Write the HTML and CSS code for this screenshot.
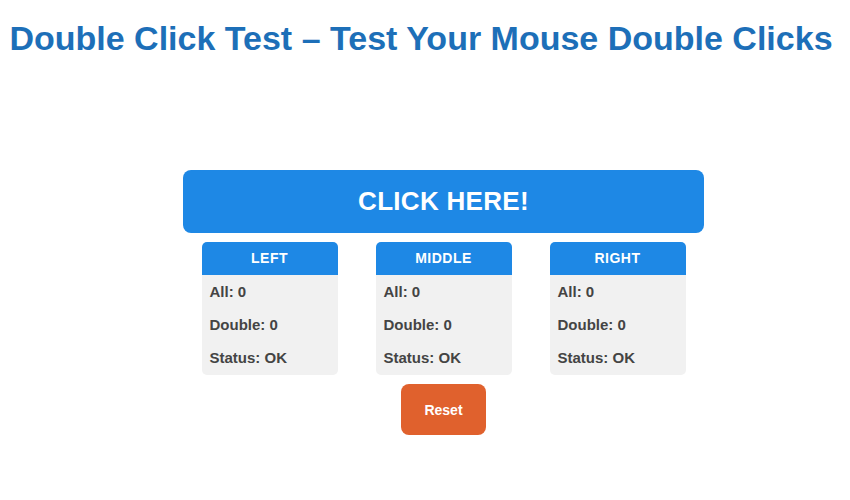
FILE: index.html
```html
<!DOCTYPE html>
<html lang="en">
<head>
<meta charset="utf-8">
<title>Double Click Test</title>
<link rel="stylesheet" href="styles.css">
</head>
<body>
<h1 class="title">Double Click Test – Test Your Mouse Double Clicks</h1>
<main class="tester">
  <button class="click-area">CLICK HERE!</button>
  <div class="cards">
    <section class="card">
      <div class="card-head">LEFT</div>
      <div class="card-body">
        <div class="row">All: 0</div>
        <div class="row">Double: 0</div>
        <div class="row">Status: OK</div>
      </div>
    </section>
    <section class="card">
      <div class="card-head">MIDDLE</div>
      <div class="card-body">
        <div class="row">All: 0</div>
        <div class="row">Double: 0</div>
        <div class="row">Status: OK</div>
      </div>
    </section>
    <section class="card">
      <div class="card-head">RIGHT</div>
      <div class="card-body">
        <div class="row">All: 0</div>
        <div class="row">Double: 0</div>
        <div class="row">Status: OK</div>
      </div>
    </section>
  </div>
  <button class="reset">Reset</button>
</main>
</body>
</html>
```
FILE: styles.css
```css
html, body {
  background: #ffffff;
}
body {
  margin: 8px;
  font-family: "Liberation Sans", Arial, sans-serif;
}
.title {
  margin: 11px 0 0;
  padding-right: 8px;
  text-align: center;
  font-size: 34px;
  font-weight: bold;
  line-height: 39px;
  color: #1d6fb8;
}
.tester {
  display: flex;
  flex-direction: column;
  align-items: center;
  margin-top: 112px;
  padding-left: 37px;
}
.click-area {
  width: 521px;
  height: 63px;
  border: none;
  border-radius: 8px;
  background: #1e88e5;
  color: #ffffff;
  font-family: "Liberation Sans", Arial, sans-serif;
  font-size: 26px;
  font-weight: bold;
  letter-spacing: 0.3px;
  padding: 0;
  cursor: pointer;
}
.cards {
  display: flex;
  margin-top: 9px;
}
.card {
  width: 136px;
  margin: 0 19px;
}
.card-head {
  height: 33px;
  line-height: 33px;
  background: #1e88e5;
  color: #ffffff;
  text-align: center;
  font-size: 14px;
  font-weight: bold;
  letter-spacing: 0.5px;
  border-radius: 5px 5px 0 0;
}
.card-body {
  background: #f1f1f1;
  border-radius: 0 0 5px 5px;
  padding: 0 8px;
  height: 100px;
}
.row {
  height: 33px;
  line-height: 33px;
  font-size: 15px;
  font-weight: bold;
  color: #444444;
}
.reset {
  margin-top: 9px;
  width: 85px;
  height: 51px;
  border: none;
  border-radius: 8px;
  background: #e0612d;
  color: #ffffff;
  font-family: "Liberation Sans", Arial, sans-serif;
  font-size: 14px;
  font-weight: bold;
  padding: 0;
  cursor: pointer;
}
```
